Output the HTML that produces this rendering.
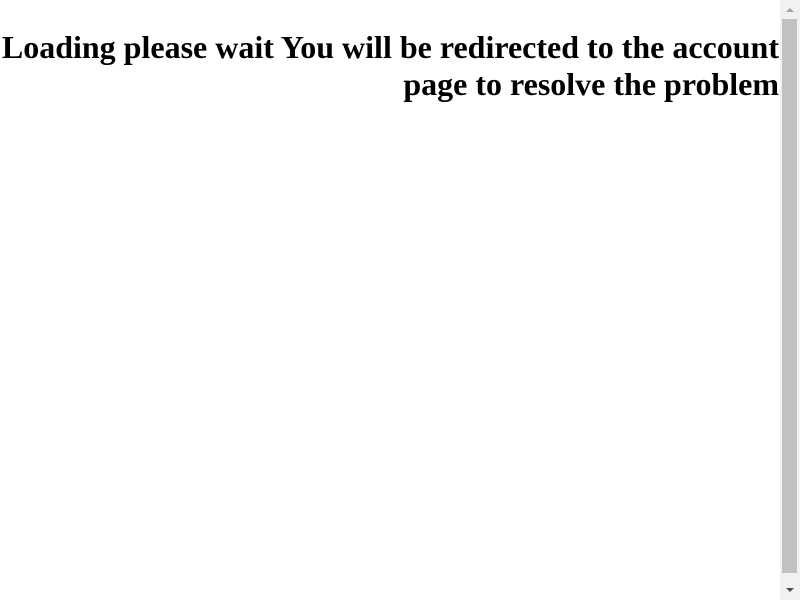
<!DOCTYPE html>
<html>
<head>
<meta charset="utf-8">
<style>
html,body{margin:0;padding:0;overflow:hidden;background:#fff;width:800px;height:600px;}
.page{position:absolute;left:0;top:0;width:779px;}
h1{font-family:"Liberation Serif",serif;font-weight:bold;font-size:32px;line-height:37px;text-align:right;margin:29px 0 0 0;color:#000;white-space:nowrap;}
.sb{position:absolute;left:780px;top:0;width:20px;height:600px;background:#f1f1f1;}
.thumb{position:absolute;left:2px;top:19px;width:15px;height:554px;background:#c1c1c1;}
.up,.down{position:absolute;left:6px;width:0;height:0;border-left:4px solid transparent;border-right:4px solid transparent;}
.up{top:8px;border-bottom:4px solid #a3a3a3;}
.down{bottom:8px;border-top:4px solid #505050;}
</style>
</head>
<body>
<div class="page"><h1>Loading please wait You will be redirected to the account<br>page to resolve the problem</h1></div>
<div class="sb"><div class="up"></div><div class="thumb"></div><div class="down"></div></div>
</body>
</html>
